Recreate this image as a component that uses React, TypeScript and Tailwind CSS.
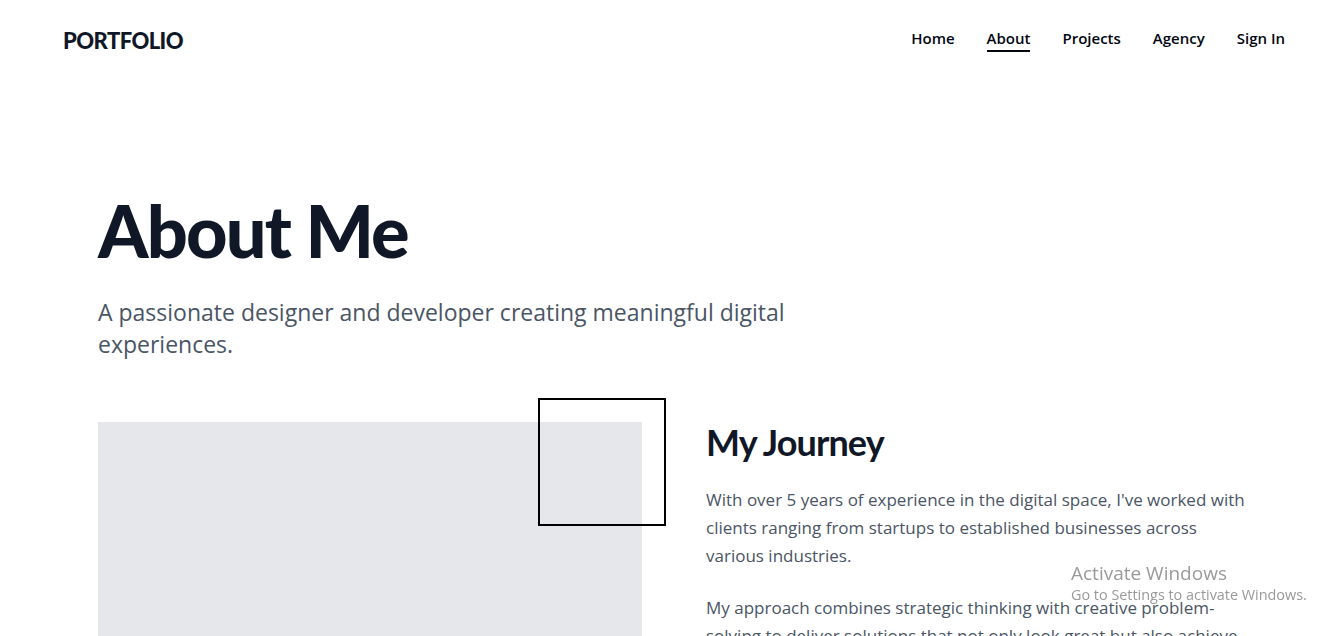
export default function App() {
  const navItems = ["Home", "About", "Projects", "Agency", "Sign In"];

  return (
    <div className="min-h-screen bg-white text-gray-900 font-['Open_Sans',sans-serif]">
      {/* Header */}
      <header className="h-20 flex items-center justify-between pl-[63px] pr-[57px]">
        <span className="font-['Lato',sans-serif] font-black text-[22px] tracking-tight text-gray-900">PORTFOLIO</span>
        <nav className="flex items-center gap-8 -mt-1">
          {navItems.map((item) => (
            <a
              key={item}
              href="#"
              className={`relative text-[15px] font-semibold text-gray-950 ${
                item === "About" ? "after:absolute after:left-0 after:right-0 after:-bottom-[3px] after:h-[2px] after:bg-gray-950" : ""
              }`}
            >
              {item}
            </a>
          ))}
        </nav>
      </header>

      {/* Intro */}
      <main className="px-[98px] pt-[114px]">
        <h1 className="font-['Lato',sans-serif] font-black text-[72px] leading-none tracking-tight text-gray-900">About Me</h1>
        <p className="mt-[30px] max-w-[720px] text-[23px] leading-8 text-gray-600">
          A passionate designer and developer creating meaningful digital experiences.
        </p>

        {/* Journey */}
        <section className="mt-[62px] grid grid-cols-2 gap-16 w-[1152px]">
          <div className="relative">
            <div className="h-[520px] bg-gray-200" />
            <div className="absolute -top-6 -right-6 w-32 h-32 border-2 border-black" />
          </div>
          <div>
            <h2 className="font-['Lato',sans-serif] font-bold text-4xl leading-10 tracking-tight text-gray-900 mb-6">My Journey</h2>
            <p className="text-[17px] leading-7 text-gray-600 mb-6">
              With over 5 years of experience in the digital space, I've worked with clients ranging from startups to established businesses across various industries.
            </p>
            <p className="text-[17px] leading-7 text-gray-600 mb-6">
              My approach combines strategic thinking with creative problem-solving to deliver solutions that not only look great but also achieve business goals.
            </p>
          </div>
        </section>
      </main>

      {/* Windows watermark */}
      <div className="fixed left-[1071px] top-[561px] pointer-events-none text-[#9a9a9a] font-['Open_Sans',sans-serif]">
        <div className="text-[19px] leading-6">Activate Windows</div>
        <div className="text-[14.4px] leading-5">Go to Settings to activate Windows.</div>
      </div>
    </div>
  );
}
